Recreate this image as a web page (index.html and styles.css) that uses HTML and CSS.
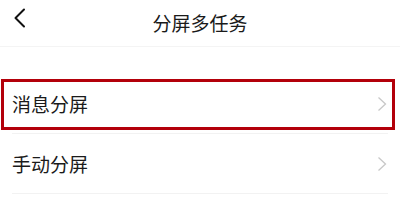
FILE: index.html
```html
<!DOCTYPE html>
<html lang="zh-CN">

<head>
    <meta charset="UTF-8">
    <meta name="viewport" content="width=device-width, initial-scale=1.0">
    <title>分屏多任务</title>
    <link rel="stylesheet" href="styles.css">
</head>

<body>

    <header class="topbar">
        <svg class="back" viewBox="0 0 14 20" width="14" height="20">
            <path d="M11 1.5 L2.5 10 L11 18.5" fill="none" stroke="#111" stroke-width="2" stroke-linecap="round" stroke-linejoin="round"></path>
        </svg>
        <h1>分屏多任务</h1>
    </header>

    <ul class="list">
        <li class="item marked">
            <span>消息分屏</span>
            <svg class="arrow" viewBox="0 0 10 16" width="10" height="16">
                <path d="M1.5 1.5 L8.5 8 L1.5 14.5" fill="none" stroke="#c8c8c8" stroke-width="1.3"></path>
            </svg>
        </li>
        <li class="item">
            <span>手动分屏</span>
            <svg class="arrow" viewBox="0 0 10 16" width="10" height="16">
                <path d="M1.5 1.5 L8.5 8 L1.5 14.5" fill="none" stroke="#c8c8c8" stroke-width="1.3"></path>
            </svg>
        </li>
    </ul>

</body>

</html>
```

FILE: styles.css
```css
* {
    padding: 0;
    margin: 0;
    box-sizing: border-box;
}

body {
    background-color: #ffffff;
    font-family: "Noto Sans CJK SC", "Noto Sans", sans-serif;
    color: #1a1a1a;
}

.topbar {
    position: relative;
    height: 47px;
    border-bottom: 1px solid #f4f4f4;
    display: flex;
    align-items: center;
    justify-content: center;
}

.back {
    position: absolute;
    left: 13px;
    top: 8px;
}

h1 {
    font-size: 19px;
    font-weight: 400;
    line-height: 36px;
}

.list {
    list-style: none;
    margin-top: 27px;
}

.item {
    position: relative;
    height: 60px;
    margin: 0 12px;
    border-bottom: 1px solid #f2f2f2;
    display: flex;
    align-items: center;
    justify-content: space-between;
    font-size: 19px;
}

.arrow {
    margin-right: 1px;
}

.marked::after {
    content: "";
    position: absolute;
    left: -11px;
    right: -7px;
    top: 5px;
    bottom: 3px;
    border: 3px solid #b3000a;
}
```
